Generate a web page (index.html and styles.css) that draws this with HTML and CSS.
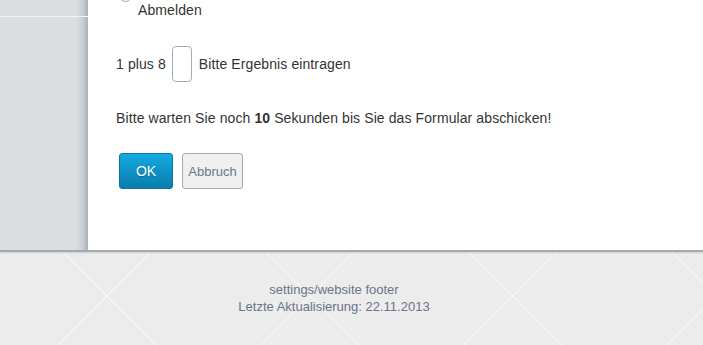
FILE: index.html
```html
<!DOCTYPE html>
<html lang="de">
<head>
<meta charset="utf-8">
<title>Abmelden</title>
<link rel="stylesheet" href="styles.css">
</head>
<body>
<div class="top">
  <aside class="sidebar"><div class="sidebar-line"></div></aside>
  <main class="main">
    <div class="radio"></div>
    <div class="option-label">Abmelden</div>
    <div class="captcha">
      <span>1 plus 8</span>
      <input class="captcha-input" type="text" aria-label="Ergebnis">
      <span>Bitte Ergebnis eintragen</span>
    </div>
    <p class="wait">Bitte warten Sie noch <b>10</b> Sekunden bis Sie das Formular abschicken!</p>
    <div class="buttons">
      <button class="btn btn-ok" type="button">OK</button>
      <button class="btn btn-cancel" type="button">Abbruch</button>
    </div>
  </main>
</div>
<footer class="footer">
  <div>settings/website footer</div>
  <div>Letzte Aktualisierung: 22.11.2013</div>
</footer>
</body>
</html>
```
FILE: styles.css
```css
html, body {
  margin: 0;
  padding: 0;
}
body {
  font-family: "Liberation Sans", Arial, sans-serif;
  font-size: 14px;
  color: #333;
  background: #ececec;
  overflow: hidden;
}
.top {
  display: flex;
  height: 250px;
  border-bottom: 2px solid #a1aab2;
  box-shadow: 0 1px 2px rgba(0, 0, 0, 0.12);
  position: relative;
  z-index: 1;
}
.sidebar {
  width: 88px;
  flex: none;
  background: linear-gradient(to right, #dbdee1 0, #dbdee1 calc(100% - 12px), #c8ced3 calc(100% - 5px), #a8b0b8 100%);
}
.sidebar-line {
  margin-top: 16px;
  height: 1px;
  background: linear-gradient(to right, #f0f2f4 0, #f0f2f4 calc(100% - 6px), #ffffff 100%);
}
.main {
  flex: 1;
  background: #fff;
  padding-left: 28px;
  letter-spacing: 0.1px;
}
.radio {
  width: 11px;
  height: 11px;
  border: 1px solid #a8a8a8;
  border-radius: 50%;
  margin: -11px 0 0 3px;
  background: #f4f4f4;
}
.option-label {
  margin-left: 22px;
  line-height: 16px;
}
.captcha {
  display: flex;
  align-items: center;
  margin-top: 28px;
  line-height: 20px;
}
.captcha-input {
  box-sizing: border-box;
  width: 20px;
  height: 36px;
  margin: 0 7px 0 6px;
  padding: 0;
  border: 1px solid #a3adb8;
  border-radius: 4px;
  background: #fff;
  font: inherit;
}
.wait {
  margin: 26px 0 0;
  line-height: 20px;
}
.wait b {
  font-weight: bold;
}
.buttons {
  display: flex;
  gap: 9px;
  margin: 25px 0 0 3px;
}
.btn {
  box-sizing: border-box;
  height: 36px;
  border-radius: 3px;
  font-family: "Liberation Sans", Arial, sans-serif;
  padding: 0;
  cursor: pointer;
  letter-spacing: 0;
}
.btn-ok {
  width: 54px;
  border: 1px solid #0a76a4;
  background: linear-gradient(to bottom, #15aae0 0, #0e93c8 50%, #0a7cab 100%);
  color: #fff;
  font-size: 14px;
  text-shadow: 0 1px 1px rgba(0, 0, 0, 0.25);
}
.btn-cancel {
  width: 61px;
  border: 1px solid #a1aab5;
  background: #f0f0f0;
  color: #6b788c;
  font-size: 13px;
}
.footer {
  height: 93px;
  box-sizing: border-box;
  padding: 29px 35px 0 0;
  text-align: center;
  font-size: 13px;
  line-height: 17px;
  color: #6a7489;
  background-color: #ececec;
  background-image:
    linear-gradient(45deg, transparent calc(50% - 0.7px), rgba(255, 255, 255, 0.8) 50%, transparent calc(50% + 0.7px)),
    linear-gradient(135deg, transparent calc(50% - 0.7px), rgba(255, 255, 255, 0.8) 50%, transparent calc(50% + 0.7px));
  background-size: 203px 203px;
  background-position: 107px 44px;
}
```
